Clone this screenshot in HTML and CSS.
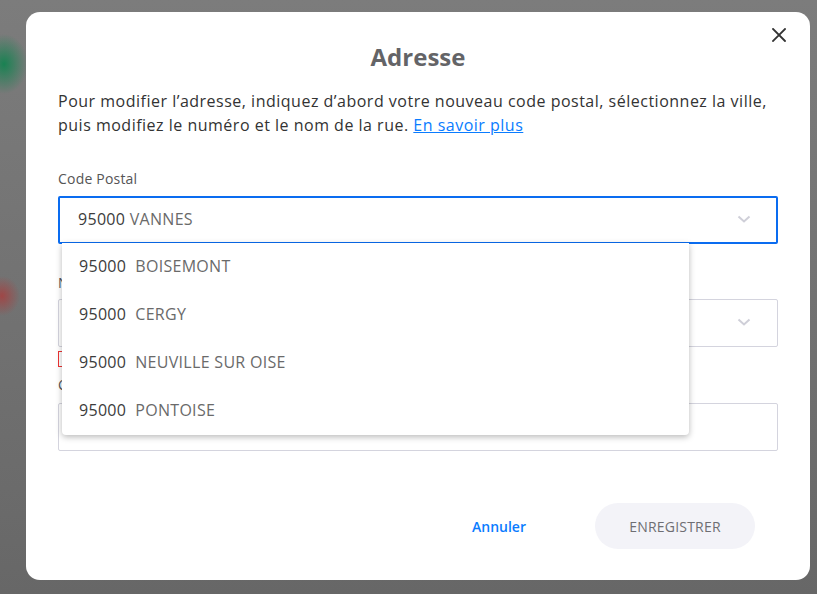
FILE: index.html
```html
<!DOCTYPE html>
<html lang="fr">
<head>
<meta charset="utf-8">
<title>Adresse</title>
<link rel="stylesheet" href="styles.css">
</head>
<body>
<div class="modal">
  <button class="close" aria-label="Fermer">
    <svg width="14" height="14" viewBox="0 0 14 14"><path d="M1 1L13 13M13 1L1 13" stroke="#333" stroke-width="1.8" stroke-linecap="square"/></svg>
  </button>
  <h1 class="title">Adresse</h1>
  <p class="intro">Pour modifier l’adresse, indiquez d’abord votre nouveau code postal, sélectionnez la ville, puis modifiez le numéro et le nom de la rue. <a href="#">En savoir plus</a></p>

  <div class="field">
    <label class="label">Code Postal</label>
    <div class="select-wrap">
      <div class="select focused">
        <span class="val"><span class="code">95000</span> <span class="city">VANNES</span></span>
        <svg class="chev" width="14" height="8" viewBox="0 0 14 8"><path d="M1.5 1.5L7 6.5L12.5 1.5" fill="none" stroke="#cfcfd8" stroke-width="2"/></svg>
      </div>
      <ul class="menu">
        <li><span class="code">95000</span><span class="city">BOISEMONT</span></li>
        <li><span class="code">95000</span><span class="city">CERGY</span></li>
        <li><span class="code">95000</span><span class="city">NEUVILLE SUR OISE</span></li>
        <li><span class="code">95000</span><span class="city">PONTOISE</span></li>
      </ul>
    </div>
  </div>

  <div class="field f2">
    <label class="label">Nom de la ville</label>
    <div class="select">
      <span class="val"></span>
      <svg class="chev" width="14" height="8" viewBox="0 0 14 8"><path d="M1.5 1.5L7 6.5L12.5 1.5" fill="none" stroke="#cfcfd8" stroke-width="2"/></svg>
    </div>
    <div class="error"></div>
  </div>

  <div class="field f3">
    <label class="label">Complément d’adresse</label>
    <div class="input"></div>
  </div>

  <div class="footer">
    <button class="cancel">Annuler</button>
    <button class="save">ENREGISTRER</button>
  </div>
</div>
</body>
</html>
```

FILE: styles.css
```css
* { box-sizing: border-box; }
html, body { margin: 0; height: 100%; }
body {
  width: 817px;
  height: 594px;
  overflow: hidden;
  padding: 12px 7px 0 26px;
  font-family: "Open Sans", "Liberation Sans", sans-serif;
  background:
    radial-gradient(ellipse 24px 30px at 4px 64px, rgba(20,130,80,0.95), rgba(20,130,80,0) 100%),
    radial-gradient(ellipse 18px 20px at 2px 296px, rgba(170,60,60,0.8), rgba(170,60,60,0) 100%),
    linear-gradient(180deg, #7c7c7c 0%, #707070 60%, #676767 100%);
}
.modal {
  position: relative;
  width: 784px;
  height: 568px;
  background: #fff;
  border-radius: 14px;
  padding: 31px 32px 0 32px;
  display: flex;
  flex-direction: column;
}
.close {
  position: absolute;
  top: 16px;
  right: 24px;
  width: 14px;
  height: 14px;
  padding: 0;
  border: 0;
  background: none;
  display: flex;
}
.title {
  margin: 0;
  text-align: center;
  font-size: 24px;
  line-height: 28px;
  font-weight: 700;
  color: #646467;
}
.intro {
  margin: 18px 0 0;
  font-size: 16px;
  line-height: 24px;
  color: #333;
  letter-spacing: 0.5px;
}
.intro a { color: #0a7cff; text-decoration: underline; }
.field { display: flex; flex-direction: column; }
.label {
  margin-top: 32px;
  font-size: 14px;
  line-height: 20px;
  color: #555;
  margin-bottom: 7px;
  letter-spacing: 0.2px;
}
.f2 .label { margin-top: 29px; margin-bottom: 6px; }
.f3 .label { margin-top: 8px; margin-bottom: 8px; }
.select-wrap { position: relative; }
.select {
  height: 48px;
  border: 1px solid #d4d4de;
  border-radius: 2px;
  display: flex;
  align-items: center;
  justify-content: space-between;
  padding: 0 26px 2px 19px;
}
.select.focused { border: 2px solid #0a6cf0; height: 48px; padding-left: 18px; padding-right: 25px; padding-bottom: 3px; }
.val { font-size: 16px; letter-spacing: 0.3px; }
.code { color: #3c3c3c; }
.city { color: #6a6a6a; }
.chev { display: block; }
.error {
  margin-top: 4px;
  width: 40px;
  height: 16px;
  border: 1px solid #e33;
}
.input {
  height: 48px;
  border: 1px solid #d4d4de;
  border-radius: 2px;
}
.menu {
  position: absolute;
  top: 47px;
  left: 4px;
  width: 627px;
  margin: 0;
  padding: 0;
  list-style: none;
  background: #fff;
  border-radius: 0 0 4px 4px;
  box-shadow: 0 2px 6px rgba(0,0,0,0.28);
  z-index: 2;
}
.menu li {
  height: 48px;
  display: flex;
  align-items: center;
  gap: 9px;
  padding-left: 17px;
  padding-bottom: 3px;
  font-size: 16px;
  letter-spacing: 0.3px;
}
.footer {
  margin-top: 52px;
  display: flex;
  justify-content: flex-end;
  align-items: center;
  padding-right: 23px;
  gap: 36px;
}
.cancel {
  width: 120px;
  height: 46px;
  border: 0;
  background: none;
  font-family: inherit;
  font-size: 14px;
  font-weight: 600;
  color: #0a7cff;
}
.save {
  width: 160px;
  height: 46px;
  border: 0;
  border-radius: 23px;
  background: #f3f3f8;
  font-family: inherit;
  font-size: 14px;
  font-weight: 500;
  color: #6e6e73;
  letter-spacing: 0.2px;
}
```
